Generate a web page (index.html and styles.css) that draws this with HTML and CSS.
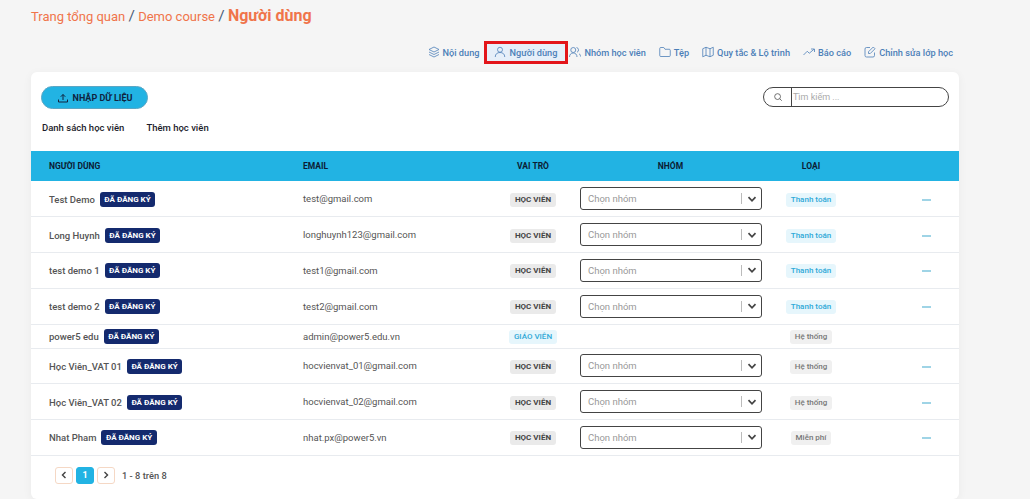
FILE: index.html
```html
<!DOCTYPE html>
<html lang="en">
<head>
    <meta charset="UTF-8">
    <meta name="viewport" content="width=device-width, initial-scale=1.0">
    <title>Người dùng</title>
    <link rel="stylesheet" href="styles.css">
</head>
<body>
    <svg class="sprites" width="0" height="0">
        <symbol id="chev" viewBox="0 0 12 12"><path d="M2.5 4.2 6 7.8l3.5-3.6" fill="none" stroke="currentColor" stroke-width="1.7"/></symbol>
    </svg>

    <div class="crumbs">
        <a>Trang tổng quan</a> <span class="sep">/</span> <a>Demo course</a> <span class="sep">/</span> <a class="here">Người dùng</a>
    </div>

    <nav class="tabs">
        <a class="tab">
            <svg viewBox="0 0 24 24"><path d="M12 2 2 7l10 5 10-5zM2 12l10 5 10-5M2 17l10 5 10-5"/></svg>
            Nội dung
        </a>
        <a class="tab active">
            <svg viewBox="0 0 24 24"><circle cx="12" cy="7.500" r="5"/><path d="M2.500 22c0-6 4-9 9.500-9s9.500 3 9.500 9"/></svg>
            Người dùng
        </a>
        <a class="tab">
            <svg viewBox="0 0 24 24"><circle cx="8.500" cy="8" r="5"/><path d="M1 22c0-5 3-8 7.500-8s7.500 3 7.500 8M15 3a5 5 0 0 1 1 9.500M20 15.500c2 1 3 3 3 5.500"/></svg>
            Nhóm học viên
        </a>
        <a class="tab">
            <svg viewBox="0 0 24 24"><path d="M1.500 5a2 2 0 0 1 2-2h6l2.500 3.500h8.500a2 2 0 0 1 2 2V19a2 2 0 0 1-2 2h-17a2 2 0 0 1-2-2z"/></svg>
            Tệp
        </a>
        <a class="tab">
            <svg viewBox="0 0 24 24"><path d="M1.500 5.500 8 2.500l8 3 6.500-3v16l-6.500 3-8-3-6.500 3zM8 2.500v16M16 5.500v16"/></svg>
            Quy tắc &amp; Lộ trình
        </a>
        <a class="tab">
            <svg viewBox="0 0 24 24"><path d="m1 18 7.500-7.500 4 4L22 6.500M16 6h7v6"/></svg>
            Báo cáo
        </a>
        <a class="tab">
            <svg viewBox="0 0 24 24"><path d="M21 13v6a3 3 0 0 1-3 3H5a3 3 0 0 1-3-3V6a3 3 0 0 1 3-3h7M9 15v-3.500L18.500 2 22 5.500 12.500 15z"/></svg>
            Chỉnh sửa lớp học
        </a>
    </nav>

    <main class="card">
        <div class="toolbar">
            <button class="import">
                <svg viewBox="0 0 24 24"><path d="M12 16V5M7.500 9.500 12 5l4.500 4.500M3 15v5h18v-5"/></svg>
                NHẬP DỮ LIỆU
            </button>
            <div class="search">
                <span class="search-icon"><svg viewBox="0 0 24 24"><circle cx="11" cy="11" r="7"/><path d="m16 16 5 5"/></svg></span>
                <span class="search-input">Tìm kiếm ...</span>
            </div>
        </div>

        <div class="subtabs">
            <a>Danh sách học viên</a>
            <a>Thêm học viên</a>
        </div>

        <table class="users">
            <colgroup>
                <col class="c-user"><col class="c-email"><col class="c-role"><col class="c-group"><col class="c-type"><col class="c-act">
            </colgroup>
            <thead>
                <tr>
                    <th>NGƯỜI DÙNG</th>
                    <th>EMAIL</th>
                    <th class="mid">VAI TRÒ</th>
                    <th class="mid">NHÓM</th>
                    <th class="mid">LOẠI</th>
                    <th></th>
                </tr>
            </thead>
            <tbody>
                <tr>
                    <td><b class="name">Test Demo</b><span class="reg">ĐÃ ĐĂNG KÝ</span></td>
                    <td>test@gmail.com</td>
                    <td class="mid"><span class="pill grey">HỌC VIÊN</span></td>
                    <td class="group"><div class="pick"><span>Chọn nhóm</span><i></i><svg><use href="#chev"/></svg></div></td>
                    <td class="mid"><span class="pill sky">Thanh toán</span></td>
                    <td class="act"><span class="dash"></span></td>
                </tr>
                <tr>
                    <td><b class="name">Long Huynh</b><span class="reg">ĐÃ ĐĂNG KÝ</span></td>
                    <td>longhuynh123@gmail.com</td>
                    <td class="mid"><span class="pill grey">HỌC VIÊN</span></td>
                    <td class="group"><div class="pick"><span>Chọn nhóm</span><i></i><svg><use href="#chev"/></svg></div></td>
                    <td class="mid"><span class="pill sky">Thanh toán</span></td>
                    <td class="act"><span class="dash"></span></td>
                </tr>
                <tr>
                    <td><b class="name">test demo 1</b><span class="reg">ĐÃ ĐĂNG KÝ</span></td>
                    <td>test1@gmail.com</td>
                    <td class="mid"><span class="pill grey">HỌC VIÊN</span></td>
                    <td class="group"><div class="pick"><span>Chọn nhóm</span><i></i><svg><use href="#chev"/></svg></div></td>
                    <td class="mid"><span class="pill sky">Thanh toán</span></td>
                    <td class="act"><span class="dash"></span></td>
                </tr>
                <tr>
                    <td><b class="name">test demo 2</b><span class="reg">ĐÃ ĐĂNG KÝ</span></td>
                    <td>test2@gmail.com</td>
                    <td class="mid"><span class="pill grey">HỌC VIÊN</span></td>
                    <td class="group"><div class="pick"><span>Chọn nhóm</span><i></i><svg><use href="#chev"/></svg></div></td>
                    <td class="mid"><span class="pill sky">Thanh toán</span></td>
                    <td class="act"><span class="dash"></span></td>
                </tr>
                <tr class="short">
                    <td><b class="name">power5 edu</b><span class="reg">ĐÃ ĐĂNG KÝ</span></td>
                    <td>admin@power5.edu.vn</td>
                    <td class="mid"><span class="pill sky">GIÁO VIÊN</span></td>
                    <td></td>
                    <td class="mid"><span class="pill pale">Hệ thống</span></td>
                    <td></td>
                </tr>
                <tr>
                    <td><b class="name">Học Viên_VAT 01</b><span class="reg">ĐÃ ĐĂNG KÝ</span></td>
                    <td>hocvienvat_01@gmail.com</td>
                    <td class="mid"><span class="pill grey">HỌC VIÊN</span></td>
                    <td class="group"><div class="pick"><span>Chọn nhóm</span><i></i><svg><use href="#chev"/></svg></div></td>
                    <td class="mid"><span class="pill pale">Hệ thống</span></td>
                    <td class="act"><span class="dash"></span></td>
                </tr>
                <tr>
                    <td><b class="name">Học Viên_VAT 02</b><span class="reg">ĐÃ ĐĂNG KÝ</span></td>
                    <td>hocvienvat_02@gmail.com</td>
                    <td class="mid"><span class="pill grey">HỌC VIÊN</span></td>
                    <td class="group"><div class="pick"><span>Chọn nhóm</span><i></i><svg><use href="#chev"/></svg></div></td>
                    <td class="mid"><span class="pill pale">Hệ thống</span></td>
                    <td class="act"><span class="dash"></span></td>
                </tr>
                <tr>
                    <td><b class="name">Nhat Pham</b><span class="reg">ĐÃ ĐĂNG KÝ</span></td>
                    <td>nhat.px@power5.vn</td>
                    <td class="mid"><span class="pill grey">HỌC VIÊN</span></td>
                    <td class="group"><div class="pick"><span>Chọn nhóm</span><i></i><svg><use href="#chev"/></svg></div></td>
                    <td class="mid"><span class="pill pale">Miễn phí</span></td>
                    <td class="act"><span class="dash"></span></td>
                </tr>
            </tbody>
        </table>

        <div class="pager">
            <a class="page prev"><svg><use href="#chev"/></svg></a>
            <a class="page on">1</a>
            <a class="page next"><svg><use href="#chev"/></svg></a>
            <span class="count">1 - 8 trên 8</span>
        </div>
    </main>
</body>
</html>
```

FILE: styles.css
```css
html, body {
    height: 100%;
}

body {
    margin: 0;
    overflow: hidden;
    background-color: #f5f5f5;
    font-family: Roboto, "Liberation Sans", sans-serif;
    color: #333;
    padding: 0 71px 0 31px;
    box-sizing: border-box;
}

.sprites {
    display: block;
    height: 0;
}

.crumbs {
    height: 33px;
    font-size: 13px;
    line-height: 31px;
    color: #f0744a;
}

.crumbs .sep {
    font-size: 15.5px;
    color: #4b5c78;
}

.crumbs .here {
    font-size: 16px;
    font-weight: 700;
}

.tabs {
    display: flex;
    justify-content: flex-end;
    align-items: center;
    gap: 13px;
    height: 39px;
    margin-right: 6px;
    font-size: 9.2px;
    font-weight: 500;
    color: #4c7fb8;
}

.tab {
    display: flex;
    align-items: center;
    gap: 3px;
    height: 16px;
    padding-bottom: 1px;
}

.tab svg {
    width: 12px;
    height: 12px;
    fill: none;
    stroke: currentColor;
    stroke-width: 1.6;
}

.tab.active {
    background-color: #e6eff9;
    outline: 3px solid #e3151a;
    padding: 0 8px 1px 7px;
    margin: 0 -9px 0 -5px;
}

.card {
    background-color: white;
    border-radius: 6px;
    box-shadow: 0 2px 10px rgba(0, 0, 0, 0.05);
    height: 427px;
    overflow: hidden;
}

.toolbar {
    display: flex;
    justify-content: space-between;
    align-items: flex-start;
    padding: 14px 10px 0 10px;
}

.import {
    display: flex;
    align-items: center;
    justify-content: center;
    gap: 4px;
    width: 107px;
    height: 23px;
    padding: 0;
    border: 1px solid #5ba6c4;
    border-radius: 12px;
    background-color: #22b3e3;
    font-family: inherit;
    font-size: 9px;
    font-weight: 700;
    color: #10233f;
}

.import svg {
    width: 12px;
    height: 12px;
    fill: none;
    stroke: currentColor;
    stroke-width: 2;
}

.search {
    display: flex;
    width: 186px;
    height: 20px;
    margin-top: 1px;
    box-sizing: border-box;
    border: 1px solid #444;
    border-radius: 10px;
    overflow: hidden;
}

.search-icon {
    display: flex;
    align-items: center;
    justify-content: center;
    width: 27px;
    border-right: 1px solid #444;
}

.search-icon svg {
    width: 10px;
    height: 10px;
    fill: none;
    stroke: #555;
    stroke-width: 2;
}

.search-input {
    padding-left: 1px;
    font-size: 9px;
    line-height: 18px;
    color: #aaa;
}

.subtabs {
    display: flex;
    gap: 22px;
    padding: 12px 0 0 11px;
    height: 30px;
    font-size: 9.5px;
    line-height: 14px;
    font-weight: 500;
    color: #1c1c2b;
}

.users {
    width: 100%;
    table-layout: fixed;
    border-collapse: collapse;
}

.c-user { width: 254px; }
.c-email { width: 204px; }
.c-role { width: 88px; }
.c-group { width: 187px; }
.c-type { width: 94px; }

.users th {
    height: 30px;
    padding: 0 0 1px 18px;
    box-sizing: border-box;
    background-color: #22b3e3;
    font-size: 8.5px;
    font-weight: 700;
    text-align: left;
    color: #0c1c33;
}

.users td {
    height: 35.75px;
    padding: 0 0 0 18px;
    box-sizing: border-box;
    border-bottom: 1px solid #e8ebef;
    font-size: 9.5px;
    color: #555;
    white-space: nowrap;
}

.users .short td {
    height: 24px;
}

.users th.mid, .users td.mid {
    padding-left: 0;
    text-align: center;
}

.users td.group {
    padding-left: 3px;
}

.users td.act {
    padding-left: 36px;
    text-align: center;
}

.name {
    display: inline-block;
    font-weight: 500;
    color: #555;
    margin: 1px 5px 0 0;
    vertical-align: middle;
}

.reg {
    display: inline-block;
    margin-top: 1px;
    padding: 0 4.5px;
    height: 15px;
    line-height: 15px;
    border-radius: 3px;
    background-color: #142a6e;
    color: white;
    font-size: 8px;
    font-weight: 700;
    vertical-align: middle;
}

.pill {
    display: inline-block;
    margin-top: 2px;
    height: 14px;
    line-height: 14px;
    padding: 0 5px;
    border-radius: 3px;
    font-size: 8px;
    font-weight: 500;
    vertical-align: middle;
}

.pill.grey {
    background-color: #eaeaea;
    color: #444;
    font-weight: 700;
}

.pill.sky {
    background-color: #e6f6fc;
    color: #2fa9d8;
}

.pill.pale {
    background-color: #f0f0f0;
    color: #777;
}

.pick {
    display: flex;
    align-items: center;
    width: 182px;
    height: 23px;
    box-sizing: border-box;
    border: 1px solid #444;
    border-radius: 3px;
    padding-left: 7px;
    font-size: 9.5px;
    color: #999;
}

.pick span {
    flex: 1;
}

.pick i {
    width: 1px;
    height: 11px;
    background-color: #bbb;
}

.pick svg {
    width: 12px;
    height: 12px;
    margin: 0 3px 0 4px;
    color: #444;
}

.dash {
    display: inline-block;
    width: 9px;
    height: 2px;
    vertical-align: middle;
    background-color: #9fd4e6;
}

.pager {
    display: flex;
    align-items: center;
    gap: 3px;
    padding: 11px 0 0 24px;
}

.page {
    display: flex;
    align-items: center;
    justify-content: center;
    width: 18px;
    height: 17px;
    box-sizing: border-box;
    border: 1px solid #f5d8c5;
    border-radius: 3px;
    font-size: 9px;
    font-weight: 700;
    color: #444;
}

.page svg {
    width: 10px;
    height: 10px;
}

.page.prev svg {
    transform: rotate(90deg);
}

.page.next svg {
    transform: rotate(-90deg);
}

.page.on {
    border-color: #22b3e3;
    background-color: #22b3e3;
    color: white;
}

.count {
    margin-left: 4px;
    font-size: 9.3px;
    font-weight: 500;
    color: #555;
}
```
